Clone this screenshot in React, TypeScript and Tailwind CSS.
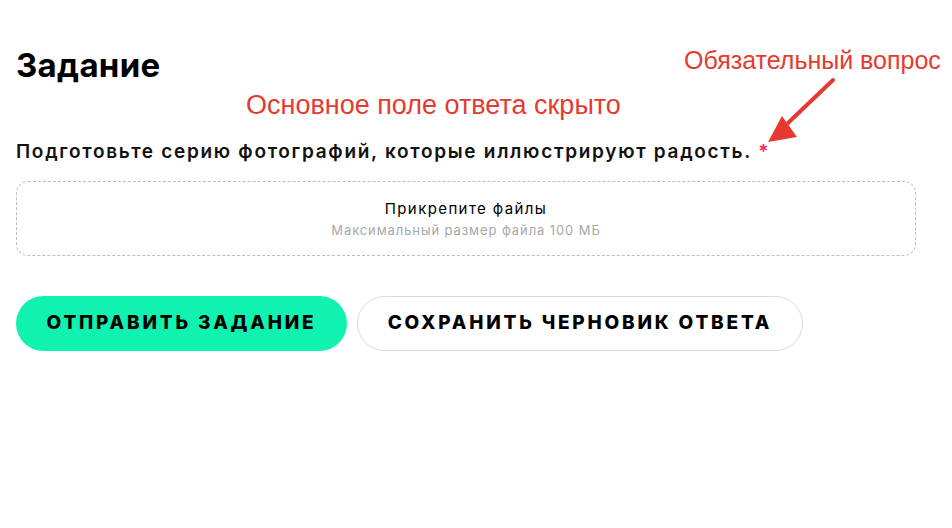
import React from 'react'

const font = { fontFamily: 'Inter, "Noto Sans", sans-serif' }
const noteFont = { fontFamily: '"Liberation Sans", Arial, sans-serif' }

function Arrow() {
  return (
    <svg
      className="absolute left-[760px] top-[76px]"
      width="80"
      height="72"
      viewBox="0 0 80 72"
    >
      <line x1="73" y1="4" x2="28" y2="47" stroke="#e53a30" strokeWidth="4" strokeLinecap="round" />
      <polygon points="8,66 22,40 37,61" fill="#e53a30" />
    </svg>
  )
}

export default function App() {
  return (
    <div className="relative w-[952px] h-[528px] bg-white" style={font}>
      <div className="px-4 pt-[45px]">
        <h1 className="text-[33px] leading-[40px] font-bold text-black tracking-[0.3px]">Задание</h1>

        <p className="mt-[55px] text-[19px] leading-[24px] font-semibold tracking-[1.7px] text-[#111]">
          Подготовьте серию фотографий, которые иллюстрируют радость.{' '}
          <span className="text-[#f0245a]">*</span>
        </p>

        <div className="mt-[17px] w-[900px] h-[75px] border border-dashed border-[#bdbdbd] rounded-[12px] flex flex-col items-center justify-center">
          <span className="text-[15px] leading-[20px] tracking-[1.4px] text-black">Прикрепите файлы</span>
          <span className="mt-[3px] text-[13px] leading-[16px] tracking-[0.9px] text-[#a8a8a8]">
            Максимальный размер файла 100 МБ
          </span>
        </div>

        <div className="mt-[40px] flex gap-[10px]">
          <button className="h-[55px] w-[331px] rounded-full bg-[#10f2b0] text-[19px] font-extrabold tracking-[2.8px] text-black">
            ОТПРАВИТЬ ЗАДАНИЕ
          </button>
          <button className="h-[55px] w-[446px] rounded-full border border-[#d9d9d9] bg-white text-[19px] font-extrabold tracking-[2.8px] text-black">
            СОХРАНИТЬ ЧЕРНОВИК ОТВЕТА
          </button>
        </div>
      </div>

      {/* пометки поверх формы */}
      <span className="absolute left-[684px] top-[45px] text-[25px] leading-[30px] text-[#e53a30]" style={noteFont}>
        Обязательный вопрос
      </span>
      <span className="absolute left-[246px] top-[89px] text-[27px] leading-[32px] text-[#e53a30]" style={noteFont}>
        Основное поле ответа скрыто
      </span>
      <Arrow />
    </div>
  )
}
